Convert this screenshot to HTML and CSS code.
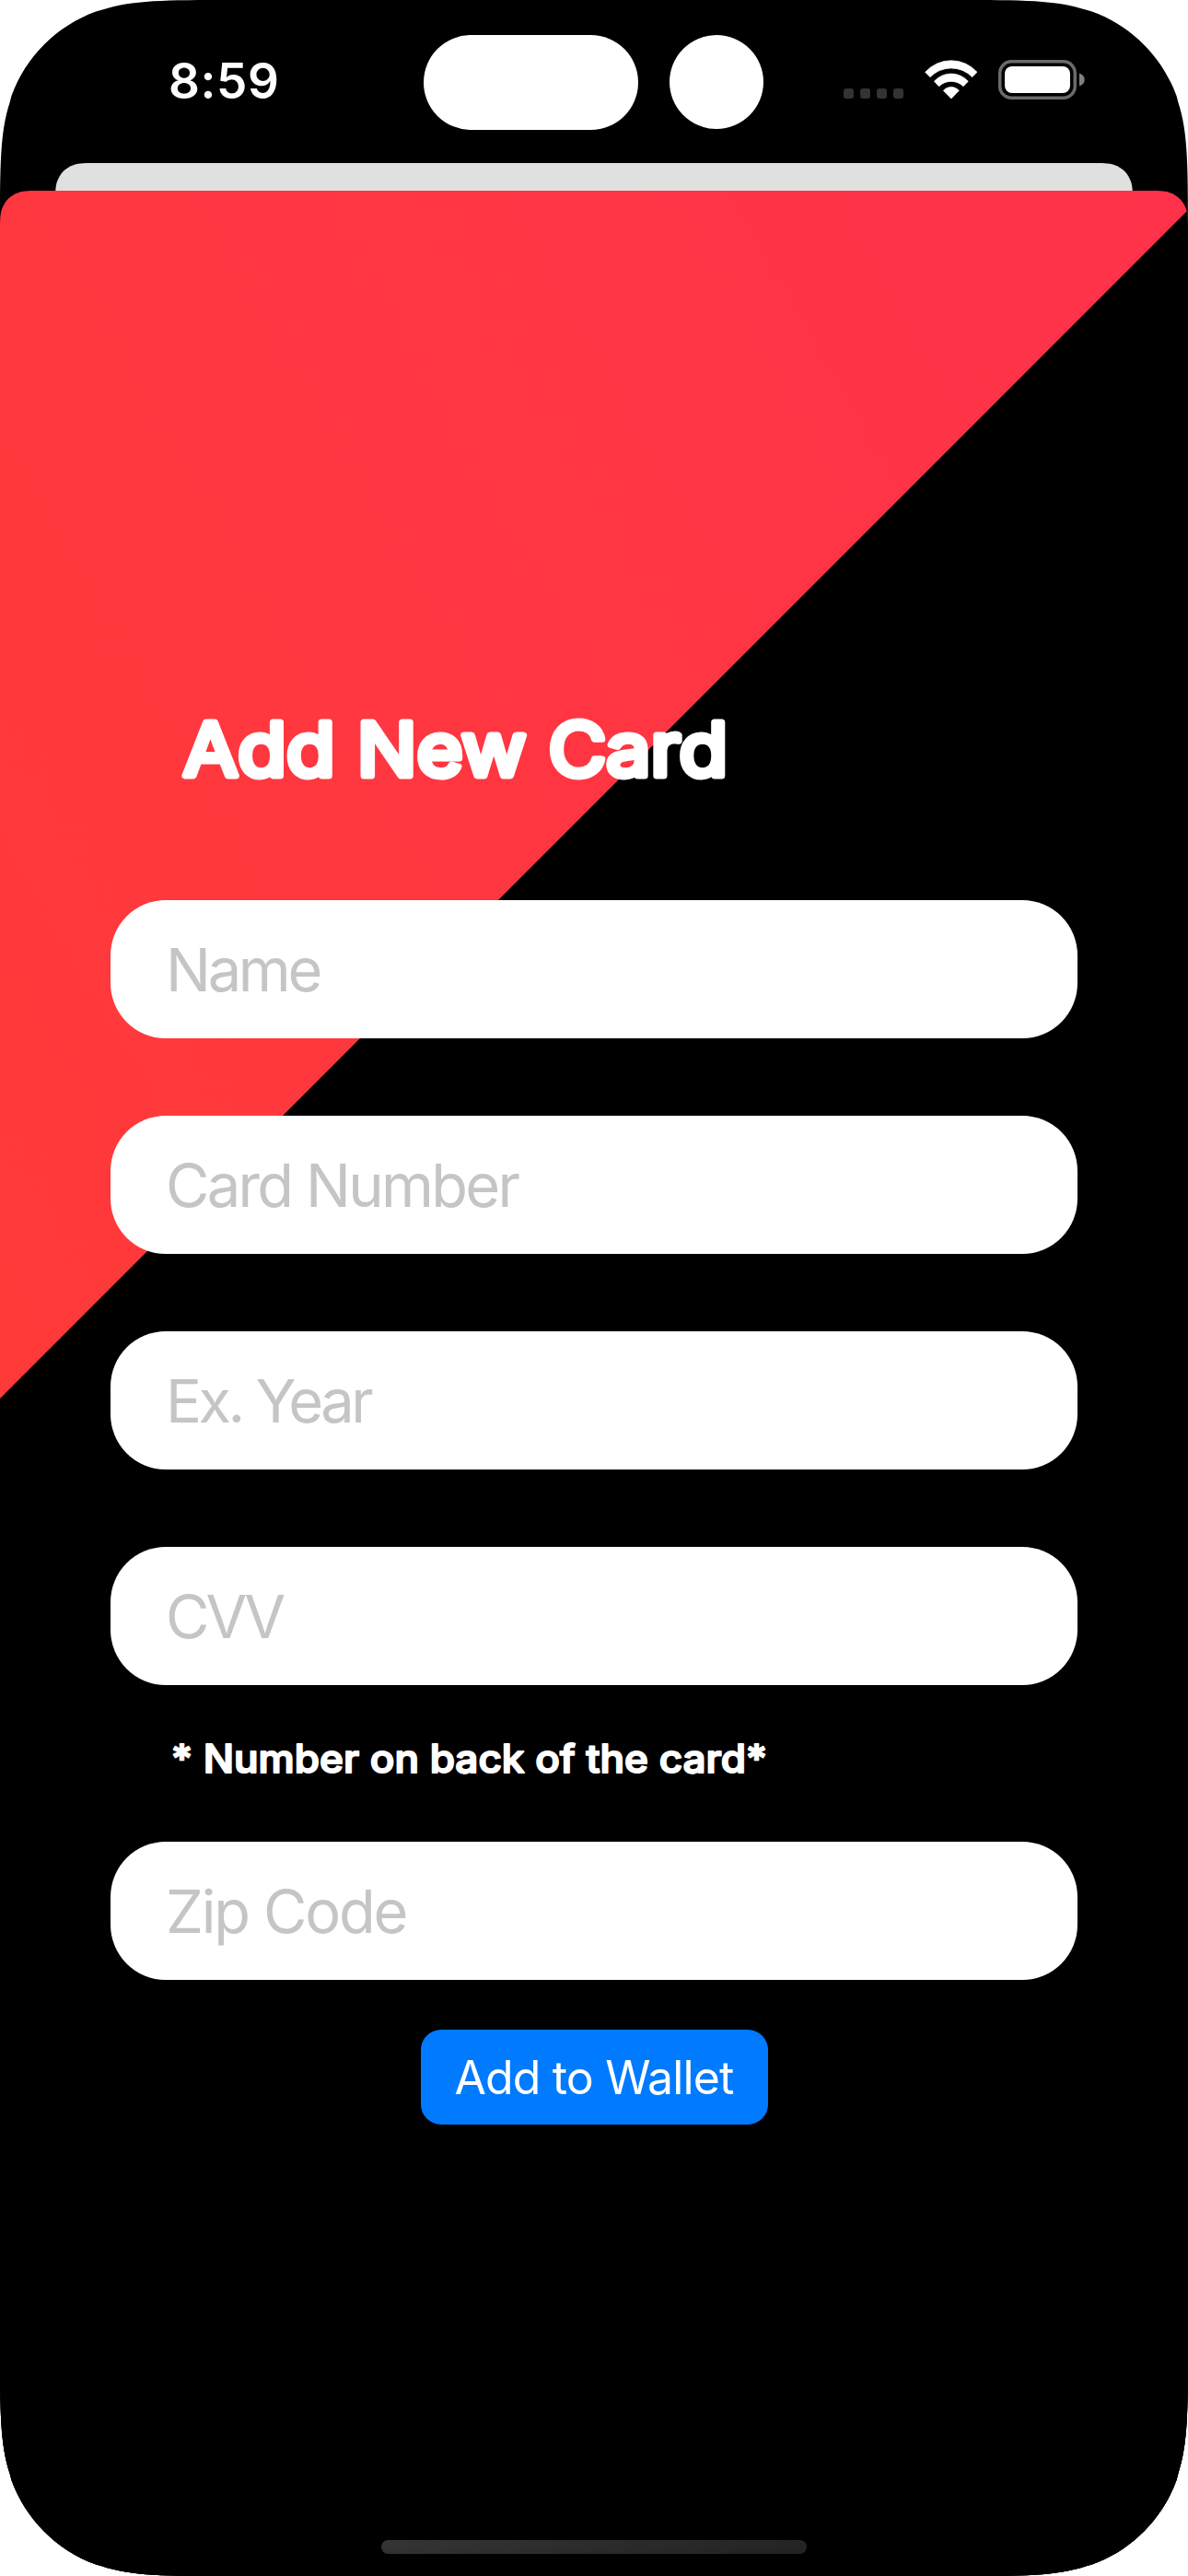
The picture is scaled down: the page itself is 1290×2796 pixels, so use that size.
FILE: index.html
```html
<!DOCTYPE html>
<html lang="en">
<head>
<meta charset="utf-8">
<title>Add New Card</title>
<link rel="stylesheet" href="styles.css">
</head>
<body>
<div class="screen">
  <header class="status-bar">
    <div class="clock">8:59</div>
    <div class="island">
      <div class="island-pill"></div>
      <div class="island-dot"></div>
    </div>
    <div class="indicators">
      <div class="cellular"><i></i><i></i><i></i><i></i></div>
      <svg class="wifi" viewBox="431 194 173 128" aria-hidden="true">
        <path d="M433 234A113 113 0 0 1 602 234L586 250A95 95 0 0 0 449 250Z"/>
        <path d="M462 264A74 74 0 0 1 573 264L557 280A57 57 0 0 0 478 280Z"/>
        <path d="M492 294A33.500 33.500 0 0 1 543 294L517.500 320Z"/>
      </svg>
      <svg class="battery" viewBox="0 0 94 43" aria-hidden="true">
        <rect class="battery-shell" x="1.750" y="1.750" width="81.500" height="39.500" rx="12.500"/>
        <rect class="battery-level" x="7" y="7" width="71" height="29" rx="8"/>
        <path class="battery-tip" d="M88 14.500Q93.700 16.500 93.700 21.500T88 28.500Z"/>
      </svg>
    </div>
  </header>
  <div class="sheet-behind"></div>
  <main class="sheet">
    <h1 class="title">
      <svg class="rounded-text" width="640" height="110"><text x="0" y="79" textLength="591" lengthAdjust="spacingAndGlyphs">Add New Card</text></svg>
    </h1>
    <form class="form">
      <div class="field"><span class="w-name">Name</span></div>
      <div class="field"><span class="w-number">Card Number</span></div>
      <div class="field"><span class="w-year">Ex. Year</span></div>
      <div class="field"><span class="w-cvv">CVV</span></div>
      <p class="hint">
        <svg class="rounded-text" width="700" height="60"><text x="0" y="45" textLength="647" lengthAdjust="spacingAndGlyphs">* Number on back of the card*</text></svg>
      </p>
      <div class="field"><span class="w-zip">Zip Code</span></div>
      <button class="submit" type="button">Add to Wallet</button>
    </form>
    <div class="home-indicator"></div>
  </main>
</div>
</body>
</html>
```
FILE: styles.css
```css
* { box-sizing: border-box; }

body {
  margin: 0;
  background: #fff;
  font-family: Inter, "Liberation Sans", sans-serif;
}

.screen {
  width: 1290px;
  height: 2796px;
  display: flex;
  flex-direction: column;
  background: #000;
  clip-path: path("M0 252.200C0 179.600 0 143.300 10.800 110.500L12.400 104.200C27.900 61.500 61.500 27.900 104.200 12.400L110.500 10.800C143.300 0 179.600 0 252.200 0H1037.800C1110.400 0 1146.700 0 1179.500 10.800L1185.800 12.400C1228.500 27.900 1262.100 61.500 1277.600 104.200L1279.200 110.500C1290 143.300 1290 179.600 1290 252.200V2543.800C1290 2616.400 1290 2652.700 1279.200 2685.500L1277.600 2691.800C1262.100 2734.500 1228.500 2768.100 1185.800 2783.600L1179.500 2785.200C1146.700 2796 1110.400 2796 1037.800 2796H252.200C179.600 2796 143.300 2796 110.500 2785.200L104.200 2783.600C61.500 2768.100 27.900 2734.500 12.400 2691.800L10.800 2685.500C0 2652.700 0 2616.400 0 2543.800Z");
}

/* Status bar */
.status-bar {
  height: 177px;
  display: grid;
  grid-template-columns: 460px 370px 460px;
}

.clock {
  padding: 57px 0 0 183px;
  color: #fff;
  font-size: 53px;
  line-height: 62px;
  font-weight: 600;
  letter-spacing: 0.600px;
}

.island {
  display: flex;
  gap: 34px;
  padding-top: 37.500px;
}

.island-pill {
  width: 232.500px;
  height: 103px;
  border-radius: 52px;
  background: #fff;
}

.island-dot {
  width: 102.500px;
  height: 102.500px;
  border-radius: 50%;
  background: #fff;
}

.indicators {
  display: flex;
  align-items: flex-start;
  padding: 65px 0 0 86px;
}

.cellular {
  display: flex;
  gap: 7px;
  margin: 31px 22.500px 0 0;
}

.cellular i {
  width: 11px;
  height: 11px;
  border-radius: 3px;
  background: #333;
}

.wifi {
  width: 57.700px;
  height: 42.700px;
  margin-right: 22.800px;
  fill: #fff;
  stroke: #fff;
  stroke-width: 2;
  stroke-linejoin: round;
}

.battery { width: 94px; height: 43px; }
.battery-shell { fill: none; stroke: #6b6b6b; stroke-width: 3.500; }
.battery-level { fill: #fff; }
.battery-tip { fill: #808080; }

/* Sheets */
.sheet-behind {
  height: 30px;
  margin: 0 60px;
  background: #e0e0e0;
  clip-path: path("M0 46C0 32.700 0 26.100 2 20.100C5.100 11.200 11.200 5.100 20.100 2C26.100 0 32.700 0 46 0H1124C1137.300 0 1143.900 0 1149.900 2C1158.800 5.100 1164.900 11.200 1168 20.100C1170 26.100 1170 32.700 1170 46Z");
}

.sheet {
  flex: 1;
  display: flex;
  flex-direction: column;
  padding: 545px 120px 24px;
  background:
    linear-gradient(135deg, transparent 926.500px, #000 927.500px),
    linear-gradient(60deg, #ff3a38, #ff324b) 0 0 / 1290px 1320px no-repeat,
    #000;
  clip-path: path("M0 46C0 32.700 0 26.100 2 20.100C5.100 11.200 11.200 5.100 20.100 2C26.100 0 32.700 0 46 0H1244C1257.300 0 1263.900 0 1269.900 2C1278.800 5.100 1284.900 11.200 1288 20.100C1290 26.100 1290 32.700 1290 46V2589H0Z");
}

/* Lettering with rounded terminals */
.rounded-text {
  display: block;
  overflow: visible;
  fill: #fff;
  stroke: #fff;
  stroke-linejoin: round;
}

.title {
  height: 110px;
  margin: 11px 0 0 79px;
  font-size: 80px;
  font-weight: 400;
}

.title svg { stroke-width: 7px; }

.form {
  display: flex;
  flex-direction: column;
  gap: 84px;
  margin-top: 104px;
}

.field {
  height: 150px;
  padding-left: 60px;
  border-radius: 60px;
  background: #fff;
  color: #c5c5c7;
  font-size: 65px;
  line-height: 152px;
  white-space: nowrap;
}

.w-name { letter-spacing: -3.300px; }
.w-number { letter-spacing: -2.700px; }
.w-year { letter-spacing: -3.500px; }
.w-cvv { letter-spacing: -4px; }
.w-zip { letter-spacing: -2.200px; }

.hint {
  height: 60px;
  margin: -34px 0 -24px 66px;
  font-size: 42px;
  font-weight: 500;
}

.hint svg { stroke-width: 2px; }

.submit {
  align-self: center;
  width: 377px;
  height: 103px;
  margin-top: -30px;
  padding: 0;
  border: 0;
  border-radius: 22px;
  background: #007aff;
  color: #fff;
  font: 400 50px/104px Inter, "Liberation Sans", sans-serif;
  letter-spacing: -0.850px;
  white-space: nowrap;
}

.home-indicator {
  width: 462px;
  height: 15px;
  margin: auto auto 0;
  border-radius: 8px;
  background: linear-gradient(170deg, #353535, #222);
}
```
